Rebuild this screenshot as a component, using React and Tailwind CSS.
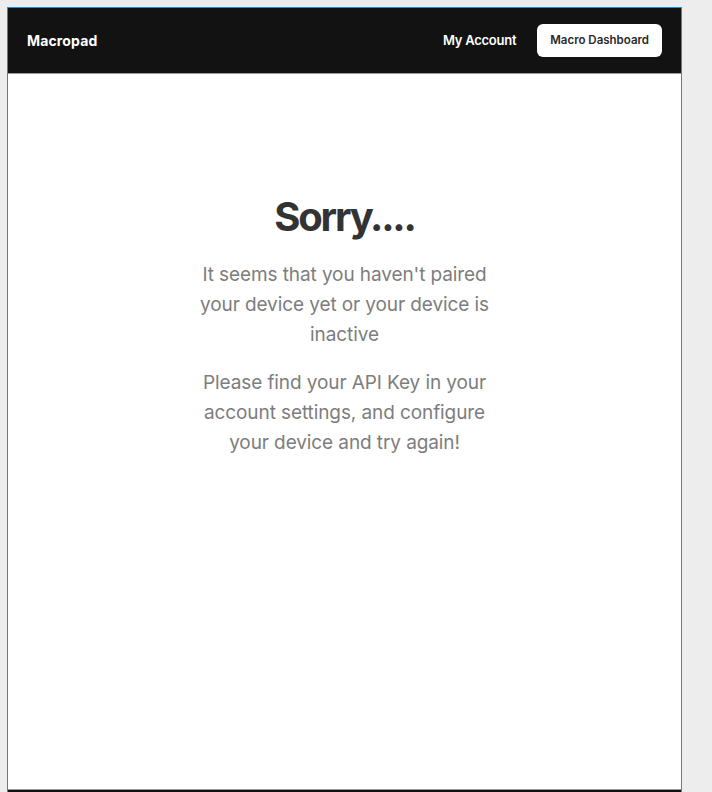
export default function App() {
  return (
    <div className="min-h-screen bg-[#ededed] p-[7px] font-['Inter',sans-serif]">
      <div className="flex w-[675px] flex-col border border-[#1e8fe6] bg-white">
        <header className="flex h-[66px] items-center justify-between border-b border-[#9a9a9a] bg-[#121212] pl-[19px] pr-[19px]">
          <span className="text-[14px] font-bold tracking-[0.01em] text-white">Macropad</span>
          <nav className="flex items-center gap-[21px]">
            <a className="text-[13px] font-semibold tracking-[-0.02em] text-white">My Account</a>
            <button className="h-[33px] rounded-[6px] bg-white px-[13px] text-[11.5px] font-semibold text-[#2a2a2a]">
              Macro Dashboard
            </button>
          </nav>
        </header>

        <main className="flex h-[715px] flex-col items-center pt-[119px] text-center">
          <h1 className="text-[40px] font-bold leading-[48px] tracking-[-0.055em] text-[#333]">Sorry....</h1>
          <p className="mt-[19px] w-[298px] text-[19px] leading-[30px] tracking-[-0.005em] text-[#7d7d7d]">
            It seems that you haven't paired your device yet or your device is inactive
          </p>
          <p className="mt-[18px] w-[298px] text-[19px] leading-[30px] tracking-[-0.005em] text-[#7d7d7d]">
            Please find your API Key in your account settings, and configure your device and try again!
          </p>
        </main>

        <footer className="h-[40px] border-t border-[#9a9a9a] bg-[#121212]" />
      </div>
    </div>
  );
}
